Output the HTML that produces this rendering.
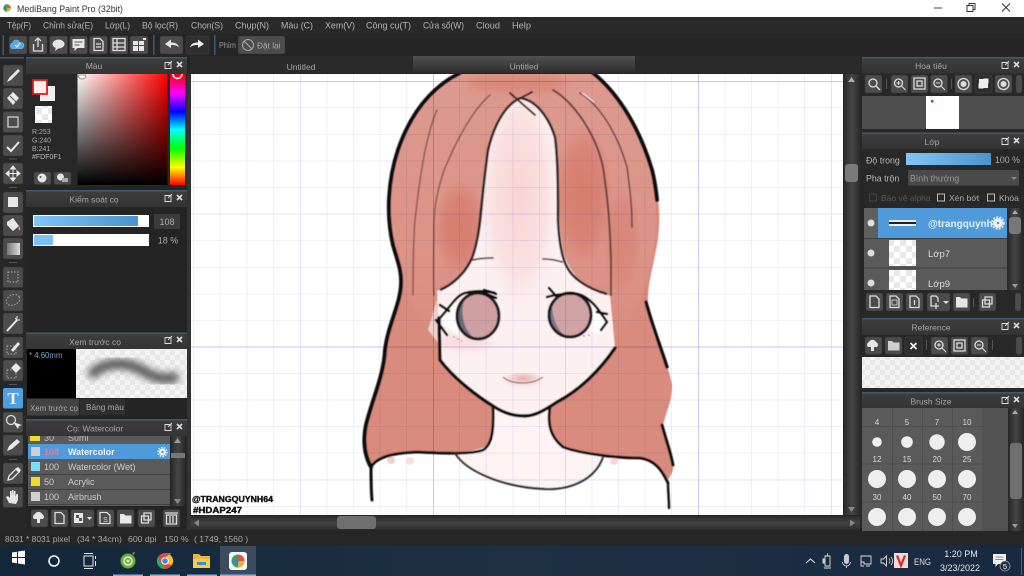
<!DOCTYPE html>
<html><head><meta charset="utf-8"><title>MediBang Paint Pro</title>
<style>
html,body{margin:0;padding:0;background:#222;width:1024px;height:576px;overflow:hidden}
svg{display:block}
text{font-family:"Liberation Sans","Noto Sans CJK SC",sans-serif}
.m{font-size:9.5px;fill:#b4b4b4}
.t{font-size:8.5px;fill:#a6a6a6;text-anchor:middle}
.s{font-size:8.5px;fill:#bcbcbc}
.b{fill:#4c4c4c;stroke:#333;stroke-width:.5}
.i{fill:none;stroke:#ddd;stroke-width:1.3}
.k{fill:#e6e6e6}
.o{fill:none;stroke:#111;stroke-linecap:round;stroke-linejoin:round}
.st{fill:none;stroke:#8f5650;stroke-linecap:round;stroke-width:1.5}
.y{fill:#d8d8d8;font-size:8px;text-anchor:middle}
.g{mix-blend-mode:multiply}
</style></head><body>
<svg width="1024" height="576" viewBox="0 0 1024 576" xmlns="http://www.w3.org/2000/svg">
<defs>
<pattern id="chk" width="12" height="12" patternUnits="userSpaceOnUse"><rect width="12" height="12" fill="#fff"/><rect width="6" height="6" fill="#e8e8e8"/><rect x="6" y="6" width="6" height="6" fill="#e8e8e8"/></pattern>
<pattern id="chk2" width="10" height="10" patternUnits="userSpaceOnUse"><rect width="10" height="10" fill="#f4f4f4"/><rect width="5" height="5" fill="#e8e8e8"/><rect x="5" y="5" width="5" height="5" fill="#e8e8e8"/></pattern>
<linearGradient id="sat"><stop offset="0" stop-color="#fff"/><stop offset="1" stop-color="#f00"/></linearGradient>
<linearGradient id="blk" x2="0" y2="1"><stop offset="0" stop-color="#000" stop-opacity="0"/><stop offset="1" stop-color="#000"/></linearGradient>
<linearGradient id="hue" x2="0" y2="1"><stop offset="0" stop-color="#f00"/><stop offset=".17" stop-color="#f0f"/><stop offset=".34" stop-color="#00f"/><stop offset=".5" stop-color="#0ff"/><stop offset=".67" stop-color="#0f0"/><stop offset=".84" stop-color="#ff0"/><stop offset="1" stop-color="#f00"/></linearGradient>
<linearGradient id="blue"><stop offset="0" stop-color="#80c6f6"/><stop offset="1" stop-color="#4a93cf"/></linearGradient>
<linearGradient id="tab" x2="0" y2="1"><stop offset="0" stop-color="#505050"/><stop offset="1" stop-color="#2c2c2c"/></linearGradient>
<linearGradient id="ttl" x2="0" y2="1"><stop offset="0" stop-color="#3d3d3d"/><stop offset="1" stop-color="#343434"/></linearGradient>
<linearGradient id="vs"><stop offset="0" stop-color="#2a2a2a"/><stop offset=".5" stop-color="#454545"/><stop offset="1" stop-color="#2a2a2a"/></linearGradient>
<linearGradient id="hs" x2="0" y2="1"><stop offset="0" stop-color="#2a2a2a"/><stop offset=".5" stop-color="#454545"/><stop offset="1" stop-color="#2a2a2a"/></linearGradient>
<linearGradient id="tb"><stop offset="0" stop-color="#13273a"/><stop offset=".5" stop-color="#1d3044"/><stop offset="1" stop-color="#182a40"/></linearGradient>
<linearGradient id="gr"><stop offset="0" stop-color="#777"/><stop offset="1" stop-color="#ddd"/></linearGradient>
<radialGradient id="fh" cx=".5" cy=".42" r=".5"><stop offset="0" stop-color="#f8d4d4"/><stop offset=".65" stop-color="#fae2e2"/><stop offset="1" stop-color="#fdf1f1" stop-opacity="0"/></radialGradient>
<radialGradient id="lip" cx=".5" cy=".3" r=".6"><stop offset="0" stop-color="#e9a9aa"/><stop offset="1" stop-color="#f8dcdc" stop-opacity="0"/></radialGradient>
<radialGradient id="hl" cx=".5" cy=".5" r=".5"><stop offset="0" stop-color="#d67d6f"/><stop offset=".6" stop-color="#d67d6f" stop-opacity=".75"/><stop offset="1" stop-color="#d67d6f" stop-opacity="0"/></radialGradient>
<linearGradient id="hup" x2="0" y2="1"><stop offset="0" stop-color="#dd9a8e"/><stop offset=".7" stop-color="#dc9386"/><stop offset="1" stop-color="#d98b7d"/></linearGradient>
<filter id="bl" x="-20%" y="-40%" width="140%" height="180%"><feGaussianBlur stdDeviation="4"/></filter>
<filter id="bl2" x="-20%" y="-20%" width="140%" height="140%"><feGaussianBlur stdDeviation=".45"/></filter>
<clipPath id="cv"><rect x="191" y="74" width="652" height="441"/></clipPath>
<clipPath id="fc"><path d="M520 98C500 108 490 140 486 170C483 210 482 235 473 257C465 275 450 285 437 291L440 360C455 380 480 398 493 406C505 414 515 416 525 416C535 416 545 410 557 402C580 390 600 370 615 348L610 296C590 288 570 280 563 250C556 210 560 160 553 130C548 112 535 100 520 98Z"/></clipPath>
</defs>

<rect width="1024" height="576" fill="#242424"/>

<!-- Title bar -->
<rect width="1024" height="17" fill="#fff"/>
<circle cx="7" cy="8" r="3.800" fill="#3a9a6a"/><path d="M7 4.200A3.800 3.800 0 0 1 10.800 8H7z" fill="#e2574c"/><path d="M7 8h3.800A3.800 3.800 0 0 1 7 11.800z" fill="#e0b040"/>
<text x="17" y="12" font-size="9.600" fill="#333" textLength="106" lengthAdjust="spacingAndGlyphs">MediBang Paint Pro (32bit)</text>
<path d="M934 8h8" stroke="#444" stroke-width="1"/>
<rect x="967" y="5.500" width="6" height="6" fill="#fff" stroke="#333"/><path d="M969 5.500V3.500h6v6h-2" fill="none" stroke="#333"/>
<path d="M1002 3.500l8 8m0-8l-8 8" stroke="#333" stroke-width="1"/>

<!-- Menu -->
<rect y="17" width="1024" height="17" fill="#292929"/>
<text class="m" x="7" y="28.500" textLength="24" lengthAdjust="spacingAndGlyphs">Tệp(F)</text>
<text class="m" x="43" y="28.500" textLength="50" lengthAdjust="spacingAndGlyphs">Chỉnh sửa(E)</text>
<text class="m" x="105" y="28.500" textLength="25" lengthAdjust="spacingAndGlyphs">Lớp(L)</text>
<text class="m" x="142" y="28.500" textLength="36" lengthAdjust="spacingAndGlyphs">Bộ lọc(R)</text>
<text class="m" x="191" y="28.500" textLength="32" lengthAdjust="spacingAndGlyphs">Chọn(S)</text>
<text class="m" x="235" y="28.500" textLength="34" lengthAdjust="spacingAndGlyphs">Chụp(N)</text>
<text class="m" x="281" y="28.500" textLength="32" lengthAdjust="spacingAndGlyphs">Màu (C)</text>
<text class="m" x="325" y="28.500" textLength="30" lengthAdjust="spacingAndGlyphs">Xem(V)</text>
<text class="m" x="366" y="28.500" textLength="45" lengthAdjust="spacingAndGlyphs">Công cụ(T)</text>
<text class="m" x="423" y="28.500" textLength="41" lengthAdjust="spacingAndGlyphs">Cửa sổ(W)</text>
<text class="m" x="476" y="28.500" textLength="24" lengthAdjust="spacingAndGlyphs">Cloud</text>
<text class="m" x="512" y="28.500" textLength="19" lengthAdjust="spacingAndGlyphs">Help</text>

<!-- Toolbar -->
<rect y="34" width="1024" height="22" fill="#252525"/>
<rect x="2.500" y="35" width="1.500" height="20" fill="#3f5a6e"/><rect x="153" y="35" width="1.500" height="20" fill="#3f5a6e"/><rect x="214" y="35" width="1.500" height="20" fill="#3f5a6e"/>
<rect class="b" x="9" y="36" width="18" height="18" rx="2"/>
<path d="M12 49a3.500 3.500 0 0 1 .5-6.500a4 4 0 0 1 7.500-.5a3.500 3.500 0 0 1 1.500 7z" fill="#5fa8e8"/><path d="M15 45l2 2 3-4" stroke="#fff" fill="none"/>
<rect class="b" x="29" y="36" width="18" height="18" rx="2"/><path class="i" d="M33.500 44v7h9v-7M38 47v-9M35 41l3-3 3 3"/>
<rect class="b" x="49.500" y="36" width="18" height="18" rx="2"/><ellipse class="k" cx="58.500" cy="44" rx="6" ry="4.500"/><path class="k" d="M56 47l-1 4 4-3z"/>
<rect class="b" x="69.500" y="36" width="18" height="18" rx="2"/><path class="k" d="M72.500 39h12v9h-7l-3 3v-3h-2z"/><path d="M74.500 42h8M74.500 45h5" stroke="#555"/>
<rect class="b" x="89.500" y="36" width="18" height="18" rx="2"/><path class="i" d="M94 38.500h6l3 3v9h-9zM96 44h5M96 47h5"/>
<rect class="b" x="110" y="36" width="18" height="18" rx="2"/><path class="i" d="M113 38.500h12v12h-12zM113 43h12M113 47h12M117 38.500v12"/>
<rect class="b" x="130" y="36" width="18" height="18" rx="2"/><path class="k" d="M133 41h5v4h-5zM139 41h5v4h-5zM133 46h5v5h-5zM139 46h5v5h-5zM143 38h3v2h-3z"/>
<rect class="b" x="160" y="36" width="23" height="18" rx="2"/><path class="k" d="M165 44l6-4.500v3c4 0 7 1 8 5c-2-2-4-2.500-8-2.500v3z"/>
<rect x="186" y="36" width="23" height="18" rx="2" fill="#2f2f2f" stroke="#444" stroke-width=".5"/><path d="M204 44l-6-4.500v3c-4 0-7 1-8 5c2-2 4-2.500 8-2.500v3z" fill="#eee"/>
<text x="219" y="48" font-size="8" fill="#999" textLength="17" lengthAdjust="spacingAndGlyphs">Phím</text>
<rect class="b" x="238" y="36" width="47" height="18" rx="2"/><circle cx="248" cy="45" r="5.500" fill="none" stroke="#aaa"/><path d="M244 41l8 8" stroke="#aaa"/>
<text x="257" y="48.500" font-size="8.300" fill="#aaa">Đặt lại</text>

<!-- Tabs -->
<rect x="190" y="56" width="223" height="17" fill="#2a2a2a"/>
<rect x="413" y="56" width="222" height="17" fill="url(#tab)"/>
<rect x="635" y="56" width="225" height="17" fill="#2a2a2a"/>
<text class="t" x="301" y="70">Untitled</text><text class="t" x="524" y="69.500">Untitled</text>

<!-- Canvas -->
<rect x="191" y="74" width="652" height="441" fill="#fff"/>
<g clip-path="url(#cv)">
<g filter="url(#bl2)">
<!-- back hair -->
<path d="M460 72C430 88 410 115 398 150C388 180 386 215 393 245C398 262 402 272 401 285C400 305 388 325 385 350C384 375 372 400 366 425C362 445 366 460 371 467C376 458 390 453 417 452C440 453 470 455 483 450C492 445 494 430 493 407L551 407C548 420 550 435 560 445C575 452 610 458 640 458C655 460 660 465 666 480C668 480 670 478 673 470C675 455 668 445 663 428C664 415 672 405 672 385C668 360 655 345 650 320C645 295 650 280 655 255C662 225 660 195 652 170C640 130 620 95 593 72Z" fill="#d98b7d"/>
<path d="M460 72C430 88 410 115 398 150C388 180 386 215 393 245C398 262 402 272 401 285L437 345L615 345L640 300C650 280 662 225 652 170C640 130 620 95 593 72Z" fill="url(#hup)"/>
<ellipse cx="460" cy="228" rx="26" ry="48" fill="url(#hl)"/>
<ellipse cx="583" cy="195" rx="30" ry="72" fill="url(#hl)"/>
<ellipse cx="622" cy="240" rx="20" ry="55" fill="url(#hl)" opacity=".6"/>
<ellipse cx="518" cy="84" rx="50" ry="10" fill="#d98a7d" filter="url(#bl)"/>
<circle cx="391" cy="460" r="4" fill="#f3cfc8"/><circle cx="410" cy="461" r="4" fill="#f9e0dc"/><circle cx="614" cy="461" r="4" fill="#f6d8d2"/>
<!-- neck -->
<path d="M493 404L493 440C490 448 470 452 455 453C465 470 500 487 545 489C570 490 595 480 603 457C580 455 555 445 550 433L550 404Z" fill="#fdf3f3"/>
<!-- face -->
<path d="M520 98C500 108 490 140 486 170C483 210 482 235 473 257C465 275 450 285 437 291L440 360C455 380 480 398 493 406C505 414 515 416 525 416C535 416 545 410 557 402C580 390 600 370 615 348L610 296C590 288 570 280 563 250C556 210 560 160 553 130C548 112 535 100 520 98Z" fill="#fdf0f1"/>
<g clip-path="url(#fc)">
<ellipse cx="519" cy="215" rx="44" ry="125" fill="url(#fh)"/>
<ellipse cx="465" cy="342" rx="28" ry="8" fill="#f9dede" filter="url(#bl)"/>
</g>
<path d="M428 330L437 300L440 345Z" fill="#f0cfc9"/>
<!-- strands -->
<path class="st" d="M437 110C426 135 420 175 415 220C413 245 413 270 413 295"/>
<path class="st" d="M490 95C470 112 452 150 443 173C438 190 434 205 434 225C434 250 433 270 434 295"/>
<path class="st" d="M553 90C575 103 596 135 603 167C608 200 610 225 611 260C611 275 611 285 611 295" style="stroke:#6d3f3a;stroke-width:2"/>
<path class="st" style="stroke:#6d3f3a" d="M580 93C600 105 618 135 627 167C630 190 632 205 632 227"/>
<path d="M582 93l12 9" stroke="#fff" stroke-width="1"/>
<!-- eyes -->
<path d="M440 312L455 298L458 335L445 325Z" fill="#fff"/>
<path d="M590 300L608 322L600 335L590 330Z" fill="#fff"/>
<ellipse cx="478" cy="316" rx="21" ry="23" fill="#cf9fa1"/>
<path d="M465 298C452 310 455 330 474 338C462 328 460 310 465 298Z" fill="#6c6b7a"/>
<ellipse cx="478" cy="316" rx="21" ry="23" fill="none" stroke="#1a1a1a" stroke-width="3"/>
<ellipse cx="570" cy="315" rx="21" ry="22" fill="#d0a2a4"/>
<path d="M552 302C545 318 555 332 566 336C556 330 552 316 552 302Z" fill="#7a7886"/>
<ellipse cx="570" cy="315" rx="21" ry="22" fill="none" stroke="#1a1a1a" stroke-width="3"/>
<path class="o" stroke-width="2.600" d="M438 320C450 308 455 296 465 293C478 290 490 291 496 294M484 290L495 293M484 293L496 298M440 305L449 311M436 320L447 335"/>
<path class="o" stroke-width="2.600" d="M547 297C558 294 570 293 578 294C592 298 600 312 607 322M549 288L556 296M597 312L607 314M607 322L601 330"/>
<path d="M453 337h2M457 339h2M461 341h1M583 336h2M588 335h2" stroke="#777" stroke-width="1"/>
<!-- lips -->
<ellipse cx="523" cy="382" rx="22" ry="9" fill="url(#lip)"/>
<path d="M503 377C512 385 532 385 543 377" fill="none" stroke="#555" stroke-width="1"/>
<!-- brows -->
<path d="M473 260C480 258 487 258 493 258M543 259C550 259 556 260 562 262" fill="none" stroke="#555" stroke-width="1.800" stroke-linecap="round"/>
<!-- inner arch -->
<path d="M520 98C505 105 494 125 488 150C484 180 482 200 480 220C478 240 474 255 470 262C464 274 452 285 440 290" fill="none" stroke="#2e2525" stroke-width="2.600"/>
<path d="M520 98C535 100 548 115 555 137C558 160 558 190 558 220C559 240 562 258 567 267C572 277 585 288 607 294" fill="none" stroke="#2e2525" stroke-width="2.600"/>
<path d="M510 93L535 115M532 92L517 100" stroke="#3a2828" stroke-width="2" stroke-linecap="round"/>
<!-- outlines -->
<path class="o" stroke-width="4" d="M460 73C430 88 410 115 398 150C388 180 386 215 393 245C398 262 402 272 401 285C400 305 388 325 385 350C384 375 372 400 366 425C362 445 366 458 371 467"/>
<path class="o" stroke-width="3" d="M371 467C371 480 371 490 372 500"/>
<path class="o" stroke-width="2.800" d="M371 467C376 458 390 453 417 452C440 453 470 455 483 450C492 445 494 430 493 407"/>
<path class="o" stroke-width="4" d="M593 73C620 95 640 130 652 170C655 182 656 190 657 200"/>
<path class="o" stroke-width="3.400" d="M646 302C652 325 660 345 667 367"/>
<path class="o" stroke-width="3" d="M662 425C666 440 670 450 673 465"/>
<path class="o" stroke-width="2.800" d="M550 407C548 420 548 435 563 447C575 452 610 458 640 458C655 460 662 470 668 483"/>
<path class="o" stroke-width="2.400" d="M668 483C668 490 669 500 669 508"/>
<path class="o" stroke-width="3.400" d="M439 318L440 360C455 380 480 398 493 406C505 414 515 416 525 416C535 416 545 410 557 402C580 390 600 370 615 348"/>
<path d="M455 453C465 470 500 487 545 489C570 490 595 480 603 457" fill="none" stroke="#333" stroke-width="2.200"/>
</g>
<!-- grid -->
<g class="g">
<g stroke="#eeeefb" stroke-width="1" fill="none">
<path d="M193.500 74v441M220 74v441M247 74v441M273.500 74v441M327 74v441M353.500 74v441M380 74v441M406.500 74v441M459.500 74v441M486 74v441M513 74v441M539.500 74v441M592 74v441M618.500 74v441M645 74v441M671.500 74v441M725 74v441M751.500 74v441M778 74v441M804.500 74v441"/>
<path d="M191 107.500h652M191 134.500h652M191 161h652M191 187.500h652M191 240.500h652M191 267.500h652M191 294h652M191 320.500h652M191 373.500h652M191 400h652M191 426.500h652M191 453h652M191 506.500h652"/>
</g>
<g stroke="#e2e2f8" stroke-width="1" fill="none">
<path d="M300.500 74v441M565.500 74v441M831.500 74v441"/>
<path d="M191 214h652M191 480h652"/>
</g>
<g stroke="#c8c8f2" stroke-width="1" fill="none">
<path d="M433.500 74v441M698.500 74v441"/>
<path d="M191 81.500h652M191 347h652"/>
</g>
</g>
<text x="192" y="502" font-size="8.500" font-weight="bold" fill="#111" textLength="81" lengthAdjust="spacingAndGlyphs" stroke="#111" stroke-width=".4">@TRANGQUYNH64</text>
<text x="193" y="513" font-size="8.500" font-weight="bold" fill="#111" textLength="49" lengthAdjust="spacingAndGlyphs" stroke="#111" stroke-width=".4">#HDAP247</text>
</g>

<!-- Canvas scrollbars -->
<rect x="844" y="74" width="16" height="441" fill="url(#vs)"/>
<path d="M848 82l3.500-5 3.500 5z" fill="#aaa"/><path d="M848 507l3.500 5 3.500-5z" fill="#888"/>
<rect x="845" y="164" width="13" height="18" rx="3" fill="#7a7a7a"/>
<rect x="191" y="516" width="669" height="14" fill="url(#hs)"/>
<path d="M199 519.500l-5 3.500 5 3.500z" fill="#888"/><path d="M850 519.500l5 3.500-5 3.500z" fill="#888"/>
<rect x="337" y="516" width="39" height="13" rx="3" fill="#6f6f6f"/>

<!-- Left tools -->
<rect x="0" y="58" width="26" height="472" fill="#272727"/>
<rect x="0" y="57" width="24" height="1.500" fill="#3f5a6e"/>
<g>
<rect class="b" x="3" y="65" width="20" height="21" rx="2"/><path d="M7 82l2-4 9-9 2 2-9 9z" fill="#e8e8e8"/>
<rect class="b" x="3" y="88" width="20" height="21" rx="2"/><path d="M7 98l6-6 6 6-6 7z" fill="#e8e8e8"/><path d="M10 96l6 6" stroke="#555"/>
<rect class="b" x="3" y="111.500" width="20" height="21" rx="2"/><rect x="8" y="117" width="10" height="10" fill="none" stroke="#ccc" stroke-width="1.300"/>
<rect class="b" x="3" y="135" width="20" height="21" rx="2"/><path d="M7 147l4 4 8-9" fill="none" stroke="#e8e8e8" stroke-width="2"/>
<rect x="9" y="158.500" width="8" height="1" fill="#555"/>
<rect class="b" x="3" y="163" width="20" height="21" rx="2"/><path d="M13 166v15M6 173.500h14M13 166l-2.500 3h5zM13 181l-2.500-3h5zM6 173.500l3-2.500v5zM20 173.500l-3-2.500v5z" stroke="#e8e8e8" fill="#e8e8e8"/>
<rect x="9" y="187" width="8" height="1" fill="#555"/>
<rect class="b" x="3" y="192" width="20" height="21" rx="2"/><rect x="8" y="197" width="10" height="10" fill="#e8e8e8"/>
<rect class="b" x="3" y="215" width="20" height="21" rx="2"/><path d="M7 222l6-4 6 8-6 5-6-6z" fill="#e8e8e8"/><path d="M19 226c1 2 2 3 1 4s-2-1-1-4z" fill="#e8a13a"/>
<rect class="b" x="3" y="238" width="20" height="21" rx="2"/><rect x="7" y="243" width="13" height="12" fill="url(#gr)"/>
<rect x="9" y="262" width="8" height="1" fill="#555"/>
<rect class="b" x="3" y="267" width="20" height="20.500" rx="2"/><rect x="8" y="272" width="10" height="10" fill="none" stroke="#aaa" stroke-dasharray="1.500 1.500"/>
<rect class="b" x="3" y="290" width="20" height="21" rx="2"/><ellipse cx="13" cy="300" rx="7" ry="5" fill="none" stroke="#aaa" stroke-dasharray="1.500 1.500" transform="rotate(-25 13 300)"/>
<rect class="b" x="3" y="313" width="20" height="21" rx="2"/><path d="M7 331l10-11" stroke="#e8e8e8" stroke-width="2"/><path d="M17 316v3M20 320h-3M15 318l2 2" stroke="#e8e8e8"/>
<rect class="b" x="3" y="337" width="20" height="21" rx="2"/><rect x="7" y="346" width="9" height="8" fill="none" stroke="#aaa" stroke-dasharray="1.500 1.500"/><path d="M11 350l7-8 2 2-7 8z" fill="#e8e8e8"/>
<rect class="b" x="3" y="360" width="20" height="21" rx="2"/><rect x="7" y="370" width="9" height="8" fill="none" stroke="#aaa" stroke-dasharray="1.500 1.500"/><path d="M11 368l5-5 5 5-5 5z" fill="#e8e8e8"/>
<rect x="9" y="384" width="8" height="1" fill="#555"/>
<rect x="3" y="388" width="20" height="20.500" rx="2" fill="#4f9fe0"/><text x="13" y="404" font-size="17" font-weight="bold" fill="#f4f4f4" text-anchor="middle" style="font-family:'Liberation Serif',serif">T</text>
<rect class="b" x="3" y="412" width="20" height="20.500" rx="2"/><circle cx="11" cy="420" r="4.500" fill="none" stroke="#ddd" stroke-width="1.300"/><path d="M13 422l5 7 1-3 3-1z" fill="#e8e8e8"/>
<rect class="b" x="3" y="435" width="20" height="20.500" rx="2"/><path d="M7 451l2-5 8-7 3 3-8 7z" fill="#e8e8e8"/>
<rect x="9" y="459" width="8" height="1" fill="#555"/>
<rect class="b" x="3" y="463" width="20" height="21" rx="2"/><path d="M8 480l1-4 7-7 3 3-7 7z" fill="none" stroke="#e8e8e8" stroke-width="1.300"/><path d="M15 469l3-2 3 3-2 3z" fill="#e8e8e8"/>
<rect class="b" x="3" y="487" width="20" height="20.500" rx="2"/><path d="M9 503l-3-6 2-1 2 2v-7h1.500v5l.5-6h1.500v6l.5-5h1.500v6l1-3h1.500v6l-2 4z" fill="#e8e8e8"/>
</g>

<!-- Color panel -->
<rect x="26" y="58" width="161" height="128" fill="#282828"/>
<rect x="26" y="57" width="161" height="1.500" fill="#3f5a6e"/>
<rect x="26" y="58.500" width="161" height="15.500" fill="url(#ttl)"/>
<text class="t" x="94" y="69">Màu</text>
<path class="i" style="stroke-width:.9" d="M165 62.500h6v6h-6zM168 65l4-4"/><path d="M177 62l5 5m0-5l-5 5" stroke="#ddd" stroke-width="1.600"/>
<rect x="40" y="86" width="15" height="15" fill="#f0f0f0"/>
<rect x="33" y="80" width="14" height="14" fill="#fdf0f1" stroke="#e01818" stroke-width="1.800"/>
<rect x="35" y="106" width="17" height="17" fill="url(#chk)"/>
<text x="32" y="134" font-size="7" fill="#aaa">R:253</text><text x="32" y="142.500" font-size="7" fill="#aaa">G:240</text><text x="32" y="151" font-size="7" fill="#aaa">B:241</text><text x="32" y="159" font-size="7" fill="#bbb">#FDF0F1</text>
<rect class="b" x="34" y="172" width="17" height="12.500" rx="2"/><circle cx="42" cy="178" r="4.500" fill="#e6e6e6"/><circle cx="40.500" cy="177" r="1" fill="#555"/>
<rect class="b" x="54" y="172" width="17" height="12.500" rx="2"/><circle cx="60.500" cy="177" r="3.500" fill="#e6e6e6"/><rect x="62" y="178" width="6" height="4" fill="#aaa"/>
<rect x="77.500" y="74" width="90" height="111" fill="url(#sat)"/><rect x="77.500" y="74" width="90" height="111" fill="url(#blk)"/>
<path d="M78 75a4 4 0 0 0 8 0z" fill="#fff" stroke="#777" stroke-width=".7"/>
<rect x="170" y="74" width="15" height="111" fill="url(#hue)"/>
<path d="M173 74a4.500 4.500 0 0 0 9 0" fill="none" stroke="#fff" stroke-width="1.500"/>
<rect x="187" y="74" width="4" height="456" fill="#333"/>

<!-- Brush control -->
<rect x="26" y="190" width="161" height="1.500" fill="#3f5a6e"/>
<rect x="26" y="191.500" width="161" height="15.500" fill="url(#ttl)"/>
<text class="t" x="94" y="202.500">Kiểm soát cọ</text>
<path class="i" style="stroke-width:.9" d="M165 195.500h6v6h-6zM168 198l4-4"/><path d="M177 195l5 5m0-5l-5 5" stroke="#ddd" stroke-width="1.600"/>
<rect x="33" y="215" width="116" height="12" fill="#fff"/><rect x="34" y="216" width="104" height="10" fill="url(#blue)"/>
<rect x="33" y="234" width="116" height="12" fill="#fff"/><rect x="34" y="235" width="19" height="10" fill="#7cc0f4"/>
<rect x="154" y="214" width="26" height="15" rx="1" fill="#3c3c3c"/>
<text x="167" y="225" font-size="9" fill="#aaa" text-anchor="middle">108</text>
<text x="168" y="243.500" font-size="9" fill="#aaa" text-anchor="middle">18 %</text>

<!-- Preview -->
<rect x="26" y="332.500" width="161" height="1.500" fill="#3f5a6e"/>
<rect x="26" y="334" width="161" height="15" fill="url(#ttl)"/>
<text class="t" x="95" y="345">Xem trước cọ</text>
<path class="i" style="stroke-width:.9" d="M165 337.500h6v6h-6zM168 340l4-4"/><path d="M177 337l5 5m0-5l-5 5" stroke="#ddd" stroke-width="1.600"/>
<rect x="27" y="349" width="49" height="49" fill="#000"/>
<text x="29" y="358" font-size="7.800" fill="#7da6cc">* 4.60mm</text>
<rect x="76" y="349" width="111" height="49" fill="url(#chk2)"/>
<path d="M90 376C105 360 128 361 145 372C155 378 166 381 178 376" fill="none" stroke="#555" stroke-width="10" filter="url(#bl)"/>
<rect x="27" y="399" width="52" height="16.500" fill="#424242"/><text x="30" y="411" font-size="8.300" fill="#aaa" textLength="48" lengthAdjust="spacingAndGlyphs">Xem trước cọ</text>
<rect x="80" y="399" width="45" height="16" fill="#2f2f2f"/><text x="86" y="410" font-size="8.300" fill="#aaa">Bảng màu</text>

<!-- Brush panel -->
<rect x="28" y="436" width="142" height="70" fill="#5a5a5a"/>
<rect x="30" y="436" width="10" height="5" fill="#efdc2a"/>
<text x="44" y="441" font-size="9" fill="#bbb">30</text><text x="68" y="441" font-size="9" fill="#bbb">Sumi</text>
<rect x="26" y="419" width="161" height="1.500" fill="#3f5a6e"/>
<rect x="26" y="420.500" width="161" height="15.500" fill="url(#ttl)"/>
<text class="t" x="95" y="431.500">Cọ: Watercolor</text>
<path class="i" style="stroke-width:.9" d="M165 424.500h6v6h-6zM168 427l4-4"/><path d="M177 424l5 5m0-5l-5 5" stroke="#ddd" stroke-width="1.600"/>
<rect x="28" y="444" width="142" height="15" fill="#4f9ada"/>
<rect x="31" y="447" width="9" height="9" fill="#d0d0d0"/>
<text x="44" y="455" font-size="9" font-weight="bold" fill="#e67a9a">108</text>
<text x="68" y="455" font-size="9" font-weight="bold" fill="#f2f2f2">Watercolor</text>
<circle cx="162.500" cy="452" r="3.500" fill="#f2f2f2"/><circle cx="162.500" cy="452" r="4.500" fill="none" stroke="#f2f2f2" stroke-dasharray="1.500 1.300" stroke-width="1.400"/><circle cx="162.500" cy="452" r="1.200" fill="#4f9ada"/>
<rect x="31" y="462" width="9" height="9" fill="#7cdcf8"/>
<text x="44" y="470" font-size="9" fill="#ccc">100</text><text x="68" y="470" font-size="9" fill="#ccc">Watercolor (Wet)</text>
<path d="M28 474.500h142" stroke="#424242"/>
<rect x="31" y="477" width="9" height="9" fill="#efdc2a"/>
<text x="44" y="485" font-size="9" fill="#ccc">50</text><text x="68" y="485" font-size="9" fill="#ccc">Acrylic</text>
<path d="M28 489.500h142" stroke="#424242"/>
<rect x="31" y="492" width="9" height="9" fill="#d0d0d0"/>
<text x="44" y="500" font-size="9" fill="#ccc">100</text><text x="68" y="500" font-size="9" fill="#ccc">Airbrush</text>
<path d="M28 504.500h142" stroke="#424242"/>
<rect x="171" y="436" width="14" height="70" fill="url(#vs)"/>
<path d="M174 443l3.500-5 3.500 5z" fill="#999"/><path d="M174 499l3.500 5 3.500-5z" fill="#888"/>
<rect x="171" y="453" width="14" height="5" fill="#777"/>
<g>
<rect class="b" x="31" y="509.500" width="17" height="17.500" rx="2"/><path d="M34 519a3 3 0 0 1 1-5a4 4 0 0 1 7 0a3 3 0 0 1 1 5h-3v4h-3v-4z" fill="#e6e6e6"/>
<rect class="b" x="51" y="509.500" width="17" height="17.500" rx="2"/><path class="i" d="M55 512.500h6l3 3v8h-9z"/>
<rect class="b" x="71" y="509.500" width="23" height="17.500" rx="2"/><path d="M74 513h9v10h-9z" fill="#e6e6e6"/><path d="M76 515h3v3h-3zM79 518h3v3h-3z" fill="#555"/><path d="M87 517h5l-2.500 3z" fill="#e6e6e6"/>
<rect class="b" x="97" y="509.500" width="17" height="17.500" rx="2"/><path class="i" d="M100 512.500h7l3 3v8h-10z"/><text x="105.500" y="522" font-size="7" fill="#ddd" text-anchor="middle">S</text>
<rect class="b" x="117" y="509.500" width="17" height="17.500" rx="2"/><path d="M120 514h4l1.500 1.500h6v8h-11.500z" fill="#e6e6e6"/>
<rect class="b" x="138" y="509.500" width="17" height="17.500" rx="2"/><path class="i" d="M144 513h7v7h-7zM141.500 516h7v7h-7z"/>
<rect class="b" x="163" y="509.500" width="17" height="17.500" rx="2"/><path class="i" d="M166.500 515h10v9h-10zM165 513h13M170 516v7M173 516v7"/>
</g>

<!-- Status -->
<rect y="530" width="1024" height="16" fill="#262626"/>
<g font-size="8.700" fill="#a8a8a8">
<text x="5" y="542" textLength="65" lengthAdjust="spacingAndGlyphs">8031 * 8031 pixel</text>
<text x="77" y="542">(34 * 34cm)</text>
<text x="128" y="542">600 dpi</text>
<text x="164" y="542">150 %</text>
<text x="194" y="542">( 1749, 1560 )</text>
</g>

<!-- Right panels -->
<rect x="860" y="56" width="164" height="474" fill="#282828"/>
<rect x="862" y="57" width="162" height="1.500" fill="#3f5a6e"/>
<rect x="862" y="58.500" width="162" height="15" fill="url(#ttl)"/>
<text class="t" x="931" y="69">Hoa tiêu</text>
<path class="i" style="stroke-width:.9" d="M1002 62.500h6v6h-6zM1005 65l4-4"/><path d="M1014 62l5 5m0-5l-5 5" stroke="#ddd" stroke-width="1.600"/>
<g>
<rect class="b" x="865" y="75" width="17" height="18" rx="2"/><circle cx="873" cy="83" r="4" class="i"/><path d="M876 86l4 4" stroke="#ddd" stroke-width="1.500"/>
<rect x="886" y="79" width="1" height="10" fill="#555"/>
<rect class="b" x="891" y="75" width="17" height="18" rx="2"/><circle cx="898.500" cy="83" r="4" class="i"/><path d="M901.500 86l4 4M896.500 83h4M898.500 81v4" stroke="#ddd"/>
<rect class="b" x="911" y="75" width="17" height="18" rx="2"/><path class="i" d="M914 78h11v11h-11zM917 81h5v5h-5z"/>
<rect class="b" x="930.500" y="75" width="17" height="18" rx="2"/><circle cx="938" cy="83" r="4" class="i"/><path d="M941 86l4 4M936 83h4" stroke="#ddd"/>
<rect x="951" y="79" width="1" height="10" fill="#555"/>
<rect class="b" x="955" y="75" width="17" height="18" rx="2"/><circle cx="963.500" cy="84" r="5.500" class="i"/><circle cx="963.500" cy="84" r="3" fill="#ddd"/>
<rect x="975" y="75" width="17" height="18" rx="2" fill="#2e2e2e" stroke="#444" stroke-width=".5"/><path d="M978.500 78.500h10v10h-10z" fill="#eee"/><path d="M978.500 83.500v-5h5M988.500 83.500v5h-5" stroke="#333" fill="none"/>
<rect class="b" x="995" y="75" width="17" height="18" rx="2"/><circle cx="1003.500" cy="84" r="5.500" class="i"/><circle cx="1003.500" cy="84" r="3" fill="#ddd"/>
<rect class="b" x="1016" y="75" width="6" height="18" rx="2"/>
</g>
<rect x="862" y="96" width="162" height="33" fill="#4e4e4e"/>
<rect x="926" y="96" width="33" height="33" fill="#fff"/><rect x="931" y="100" width="2.500" height="2.500" fill="#c33"/>
<rect x="862" y="132.500" width="162" height="1.500" fill="#3f5a6e"/>
<rect x="862" y="134" width="162" height="15" fill="url(#ttl)"/>
<text class="t" x="932" y="145">Lớp</text>
<path class="i" style="stroke-width:.9" d="M1002 138.500h6v6h-6zM1005 141l4-4"/><path d="M1014 138l5 5m0-5l-5 5" stroke="#ddd" stroke-width="1.600"/>
<text x="866" y="163.500" font-size="8.800" fill="#b8b8b8">Độ trong</text>
<rect x="906" y="153" width="85" height="12" fill="url(#blue)"/>
<text x="995" y="163" font-size="8.800" fill="#aaa">100 %</text>
<text x="866" y="181.500" font-size="8.800" fill="#b8b8b8">Pha trộn</text>
<rect x="908" y="170" width="111" height="15.500" rx="1" fill="#4a4a4a"/>
<text x="910" y="181.500" font-size="8.800" fill="#9a9a9a">Bình thường</text><path d="M1011 177h6l-3 3z" fill="#888"/>
<rect x="869.500" y="194" width="7" height="7" fill="none" stroke="#444"/><text x="881" y="201" font-size="8.500" fill="#585858">Bảo vệ alpha</text>
<rect x="937.500" y="194" width="7" height="7" fill="none" stroke="#bbb"/><text x="949" y="201" font-size="8.500" fill="#aaa">Xén bớt</text>
<rect x="987.500" y="194" width="7" height="7" fill="none" stroke="#bbb"/><text x="999" y="201" font-size="8.500" fill="#aaa">Khóa</text>

<rect x="864" y="208" width="143" height="82" fill="#5a5a5a"/>
<rect x="864" y="208" width="14" height="30" fill="#5f5f5f"/>
<rect x="878" y="208" width="129" height="30" fill="#4f9ada"/>
<circle cx="871" cy="223" r="3.500" fill="#ddd"/>
<rect x="889" y="220" width="27" height="6" fill="#eee"/><rect x="889" y="222" width="27" height="2" fill="#222"/>
<text x="928" y="227" font-size="10" font-weight="bold" fill="#e6f0fa">@trangquynh</text>
<circle cx="998" cy="223" r="5" fill="#f2f2f2"/><circle cx="998" cy="223" r="6" fill="none" stroke="#f2f2f2" stroke-dasharray="1.800 1.500" stroke-width="1.600"/><circle cx="998" cy="223" r="1.300" fill="#4f9ada"/>
<path d="M864 238.500h143" stroke="#404040"/><path d="M864 268h143" stroke="#404040"/>
<circle cx="871" cy="253" r="3.500" fill="#ddd"/><rect x="889" y="240" width="27" height="26" fill="url(#chk)"/>
<text x="928" y="257" font-size="9.500" fill="#ddd">Lớp7</text>
<circle cx="871" cy="283" r="3.500" fill="#ddd"/><rect x="889" y="270" width="27" height="20" fill="url(#chk)"/>
<text x="928" y="287" font-size="9.500" fill="#ddd">Lớp9</text>
<rect x="1008" y="208" width="14" height="82" fill="url(#vs)"/>
<path d="M1012 214l3-4 3 4z" fill="#aaa"/><path d="M1012 284l3 4 3-4z" fill="#999"/>
<rect x="1009" y="217" width="12" height="17" rx="3" fill="#777"/>
<g>
<rect class="b" x="866" y="293" width="17" height="18" rx="2"/><path class="i" d="M870 296h6l3 3v8.500h-9z"/>
<rect class="b" x="886" y="293" width="17" height="18" rx="2"/><path class="i" d="M890 296h6l3 3v8.500h-9z"/><rect x="892" y="300" width="5" height="5" fill="none" stroke="#ddd" stroke-width=".8"/>
<rect class="b" x="906" y="293" width="17" height="18" rx="2"/><path class="i" d="M910 296h6l3 3v8.500h-9zM914.500 305v-5"/>
<rect class="b" x="927" y="293" width="23" height="18" rx="2"/><path class="i" d="M931 296h5l2 2v4M931 296v10h4M936 303v6M933 306h6"/><path d="M943 301h6l-3 3z" fill="#ddd"/>
<rect class="b" x="953" y="293" width="17" height="18" rx="2"/><path d="M956 297h4l1.500 1.500h6v9h-11.500z" fill="#e6e6e6"/>
<rect x="973" y="298" width="1" height="9" fill="#555"/>
<rect class="b" x="979" y="293" width="17" height="18" rx="2"/><path class="i" d="M985 297h7v7h-7zM982.500 300h7v7h-7z"/>
<rect class="b" x="1015" y="293" width="6" height="18" rx="2"/>
</g>

<rect x="862" y="318" width="162" height="1.500" fill="#3f5a6e"/>
<rect x="862" y="319.500" width="162" height="15.500" fill="url(#ttl)"/>
<text class="t" x="931" y="330.500">Reference</text>
<path class="i" style="stroke-width:.9" d="M1002 323.500h6v6h-6zM1005 326l4-4"/><path d="M1014 323l5 5m0-5l-5 5" stroke="#ddd" stroke-width="1.600"/>
<g>
<rect class="b" x="865" y="337" width="17" height="17.500" rx="2"/><path d="M868 347a3 3 0 0 1 1-5a4 4 0 0 1 7 0a3 3 0 0 1 1 5h-3v4h-3v-4z" fill="#e6e6e6"/>
<rect class="b" x="885" y="337" width="17" height="17.500" rx="2"/><path d="M888 341h4l1.500 1.500h6v8h-11.500z" fill="#cfcfcf"/>
<rect x="905" y="337" width="17" height="17.500" rx="2" fill="#2e2e2e" stroke="#444" stroke-width=".5"/><path d="M910.500 343l6 6m0-6l-6 6" stroke="#eee" stroke-width="1.800"/>
<rect x="926" y="340" width="1" height="10" fill="#555"/>
<rect class="b" x="931" y="337" width="17" height="17.500" rx="2"/><circle cx="939" cy="345" r="4" class="i"/><path d="M942 348l4 4M937 345h4M939 343v4" stroke="#ddd"/>
<rect class="b" x="951" y="337" width="17" height="17.500" rx="2"/><path class="i" d="M954 340h11v11h-11zM957 343h5v5h-5z"/>
<rect class="b" x="971" y="337" width="17" height="17.500" rx="2"/><circle cx="979" cy="345" r="4" class="i"/><path d="M982 348l4 4M977 345h4" stroke="#ddd"/>
<rect x="992" y="340" width="1" height="10" fill="#555"/>
<rect class="b" x="1016" y="337" width="6" height="17.500" rx="2"/>
</g>
<rect x="862" y="357" width="162" height="31" fill="url(#chk2)"/>

<rect x="862" y="392" width="162" height="1.500" fill="#3f5a6e"/>
<rect x="862" y="393.500" width="162" height="15" fill="url(#ttl)"/>
<text class="t" x="931" y="404.500">Brush Size</text>
<path class="i" style="stroke-width:.9" d="M1002 397.500h6v6h-6zM1005 400l4-4"/><path d="M1014 397l5 5m0-5l-5 5" stroke="#ddd" stroke-width="1.600"/>
<rect x="862" y="408" width="146" height="123" fill="#525252"/>
<rect x="862" y="408" width="120" height="123" fill="#5a5a5a"/>
<path d="M892.500 408v123M922.500 408v123M952.500 408v123M862 426.500h120M862 464h120M862 502h120" stroke="#4e4e4e" stroke-width="1"/>
<text class="y" x="877" y="425">4</text><text class="y" x="907" y="425">5</text><text class="y" x="937" y="425">7</text><text class="y" x="967" y="425">10</text>
<text class="y" x="877" y="462">12</text><text class="y" x="907" y="462">15</text><text class="y" x="937" y="462">20</text><text class="y" x="967" y="462">25</text>
<text class="y" x="877" y="500">30</text><text class="y" x="907" y="500">40</text><text class="y" x="937" y="500">50</text><text class="y" x="967" y="500">70</text>
<g fill="#eee"><circle cx="877" cy="442" r="4.800"/><circle cx="907" cy="442" r="5.800"/><circle cx="937" cy="442" r="7.700"/><circle cx="967" cy="442" r="9"/>
<circle cx="877" cy="479" r="9"/><circle cx="907" cy="479" r="9"/><circle cx="937" cy="479" r="9"/><circle cx="967" cy="479" r="9"/>
<circle cx="877" cy="517" r="9"/><circle cx="907" cy="517" r="9"/><circle cx="937" cy="517" r="9"/><circle cx="967" cy="517" r="9"/></g>
<rect x="1009" y="408" width="14" height="123" fill="url(#vs)"/>
<path d="M1012 414l3-4 3 4z" fill="#aaa"/><path d="M1012 524l3 4 3-4z" fill="#999"/>
<rect x="1010" y="443" width="12" height="56" rx="3" fill="#6f6f6f"/>

<!-- Taskbar -->
<rect y="546" width="1024" height="30" fill="url(#tb)"/>
<path d="M12 552.500l5-.8v5.300h-5zM18 551.500l7-1v6.500h-7zM12 558h5v5.300l-5-.8zM18 558h7v6.500l-7-1z" fill="#fff"/>
<circle cx="54" cy="561" r="5" fill="none" stroke="#fff" stroke-width="1.500"/>
<path d="M84 556h9v10h-9zM84 553.500h9M84 568.500h9M95.500 556v3M95.500 561v5" fill="none" stroke="#e8e8e8" stroke-width="1"/>
<circle cx="128" cy="561" r="7.500" fill="#6aaa3c"/><circle cx="128" cy="561" r="4" fill="none" stroke="#e8f0d0" stroke-width="1.500"/><circle cx="128" cy="561" r="1.500" fill="#e8f0d0"/><path d="M132 553l3-1-1 3z" fill="#e07a3a"/>
<circle cx="165" cy="561" r="8" fill="#e2483c"/><path d="M165 569a8 8 0 0 1-7-12l4 7z" fill="#35a853"/><path d="M165 553a8 8 0 0 1 7 12l-4.500-1z" fill="#f5c02a"/><path d="M158 557l7-4h7l-7 4z" fill="#e2483c"/><circle cx="165" cy="561" r="3.800" fill="#fff"/><circle cx="165" cy="561" r="2.800" fill="#4285f4"/>
<path d="M193 554h6l2 2h9v4h-17z" fill="#e8b63a"/><rect x="193" y="559" width="17" height="9" fill="#f4cd4e"/><rect x="197" y="562" width="9" height="3" fill="#3a8ed4"/>
<rect x="220" y="546" width="36" height="30" fill="#3c4c5e"/>
<rect x="229" y="552" width="18" height="18" rx="3" fill="#f6f6f6"/>
<circle cx="238" cy="561" r="6.500" fill="#35a06a"/><path d="M238 554.500a6.500 6.500 0 0 1 6.500 6.500h-6.500z" fill="#e4504a"/><path d="M238 561h6.500a6.500 6.500 0 0 1-6.500 6.500z" fill="#e8b13a"/><circle cx="236" cy="562" r="2.500" fill="#3a88c8"/>
<rect x="113" y="574.500" width="30" height="1.500" fill="#76b9ed"/><rect x="150" y="574.500" width="30" height="1.500" fill="#76b9ed"/><rect x="187" y="574.500" width="30" height="1.500" fill="#76b9ed"/><rect x="220" y="574.500" width="36" height="1.500" fill="#76b9ed"/>
<path d="M806 563l4.500-4 4.500 4" fill="none" stroke="#ddd" stroke-width="1.100"/>
<path d="M825 556h5v10h-5zM823 559h1v4h-1zM827.500 553.500v2M824 568h7" fill="none" stroke="#ddd" stroke-width=".9"/>
<rect x="844" y="554" width="5" height="10" rx="2.500" fill="#c8c8d0"/><path d="M842.500 562a4 4 0 0 0 8 0M846.500 566v2" stroke="#c8c8d0" fill="none"/>
<path d="M861 556h10v8h-7v-2h-3zM861 556v10h3M866 566h4" fill="none" stroke="#ddd" stroke-width=".9"/>
<path d="M881 559h2.500l3-3v10l-3-3h-2.500z" fill="none" stroke="#ddd" stroke-width=".9"/><path d="M889 558.500a4 4 0 0 1 0 5M891 557a6 6 0 0 1 0 8" fill="none" stroke="#ddd" stroke-width=".8"/>
<rect x="894" y="553" width="14" height="15" fill="#f3d9d9"/><path d="M897 555.500l4 10 4-10" fill="none" stroke="#d42a2a" stroke-width="2.200"/>
<text x="914" y="565" font-size="9" fill="#ddd" textLength="17" lengthAdjust="spacingAndGlyphs">ENG</text>
<text x="961" y="557" font-size="9" fill="#e6e6e6" text-anchor="middle">1:20 PM</text>
<text x="960" y="571" font-size="9" fill="#e6e6e6" text-anchor="middle">3/23/2022</text>
<path d="M993 554h13v10h-8l-2.500 3v-3h-2.500z" fill="#f0f0f0"/><path d="M995.500 557h8M995.500 559.500h8" stroke="#666" stroke-width=".8"/>
<circle cx="1005" cy="566" r="5" fill="#1d2f42" stroke="#aaa" stroke-width=".7"/><text x="1005" y="569" font-size="7.500" fill="#fff" text-anchor="middle">5</text>
<rect x="1021" y="548" width="1" height="27" fill="#55626f"/>
</svg>
</body></html>
